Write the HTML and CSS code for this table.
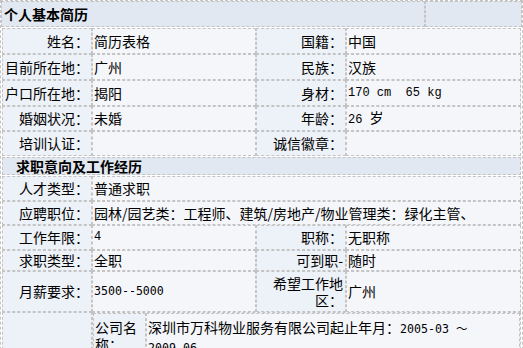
FILE: index.html
```html
<!DOCTYPE html>
<html lang="zh-CN">
<head>
<meta charset="utf-8">
<title>个人基本简历</title>
<link rel="stylesheet" href="styles.css">
</head>
<body>
<div class="resume">
  <div class="head">
    <div class="head-title">个人基本简历</div>
    <div class="head-side"></div>
  </div>

  <div class="grid basic">
    <div class="cell lab">姓名：</div><div class="cell val">简历表格</div>
    <div class="cell lab">国籍：</div><div class="cell val">中国</div>

    <div class="cell lab">目前所在地：</div><div class="cell val">广州</div>
    <div class="cell lab">民族：</div><div class="cell val">汉族</div>

    <div class="cell lab">户口所在地：</div><div class="cell val">揭阳</div>
    <div class="cell lab">身材：</div><div class="cell val"><span class="mono">170 cm  65 kg</span></div>

    <div class="cell lab">婚姻状况：</div><div class="cell val">未婚</div>
    <div class="cell lab">年龄：</div><div class="cell val"><span><span class="mono">26 </span>岁</span></div>

    <div class="cell lab">培训认证：</div><div class="cell val"></div>
    <div class="cell lab">诚信徽章：</div><div class="cell val"></div>
  </div>

  <div class="section">求职意向及工作经历</div>

  <div class="grid job">
    <div class="cell lab">人才类型：</div><div class="cell val span3">普通求职</div>

    <div class="cell lab">应聘职位：</div><div class="cell val span3">园林/园艺类：工程师、建筑/房地产/物业管理类：绿化主管、</div>

    <div class="cell lab">工作年限：</div><div class="cell val"><span class="mono">4</span></div>
    <div class="cell lab">职称：</div><div class="cell val">无职称</div>

    <div class="cell lab">求职类型：</div><div class="cell val">全职</div>
    <div class="cell lab">可到职-</div><div class="cell val">随时</div>

    <div class="cell lab">月薪要求：</div><div class="cell val"><span class="sans-mono">3500--5000</span></div>
    <div class="cell lab">希望工作地区：</div><div class="cell val">广州</div>

    <div class="cell lab"></div>
    <div class="cell holder span3">
      <div class="company">
        <div class="cell lab top">公司名称：</div>
        <div class="cell val top"><div class="text">深圳市万科物业服务有限公司起止年月：<span class="sans-mono">2005-03 ～</span><br><span class="sans-mono">2009-06</span></div></div>
        <div class="cell lab">所属行业：</div>
        <div class="cell val">房地产/物业管理</div>
      </div>
    </div>
  </div>
</div>
</body>
</html>
```

FILE: styles.css
```css
html, body {
  margin: 0;
  padding: 0;
  background: #ffffff;
}

html {
  overflow: hidden;
}

body {
  font-family: "Noto Sans CJK SC", "Noto Sans", sans-serif;
  font-size: 14px;
  line-height: 17px;
  color: #000000;
}

.resume {
  width: 521px;
  border: 1px dashed #c4c4c4;
}

.head {
  display: flex;
  height: 26px;
}

.head-title,
.head-side {
  box-sizing: border-box;
  border: 1px dashed #c4c4c4;
  background: #e2e8f1;
}

.head-title {
  width: 424px;
  padding-left: 2px;
  font-weight: bold;
  display: flex;
  align-items: center;
}

.head-side {
  flex: 1;
}

.grid {
  display: grid;
  grid-template-columns: 90px 164px 90px 175px;
  margin: 0 1px;
}

.basic {
  margin-top: 1px;
  grid-template-rows: 26px 26px 26px 25px 25px;
}

.section {
  box-sizing: border-box;
  height: 18px;
  margin: 1px 1px 0;
  padding-left: 13px;
  border: 1px dashed #c4c4c4;
  background: #e2e8f1;
  font-weight: bold;
  display: flex;
  align-items: center;
}

.job {
  margin-top: 1px;
  grid-template-rows: 25px 24px 25px 21px 41px auto;
}

.cell {
  box-sizing: border-box;
  border: 1px dashed #c4c4c4;
  display: flex;
  align-items: center;
  min-width: 0;
}

.lab {
  background: #edf1f8;
  justify-content: flex-end;
  text-align: right;
  padding-right: 2px;
}

.val {
  background: #f4f6fa;
  padding-left: 1px;
}

.span3 {
  grid-column: span 3;
}

.holder {
  display: block;
  padding: 0;
  background: #f4f6fa;
}

.company {
  display: grid;
  grid-template-columns: 53px 1fr;
}

.company .lab {
  justify-content: flex-start;
  text-align: left;
  padding: 0 1px;
}

.company .top {
  align-items: flex-start;
  padding-top: 5px;
  padding-bottom: 4px;
}

.mono {
  font-family: "Liberation Mono", monospace;
  font-size: 12px;
  white-space: pre;
}

.sans-mono {
  font-family: "DejaVu Sans Mono", monospace;
  font-size: 11.6px;
  white-space: pre;
}
```
